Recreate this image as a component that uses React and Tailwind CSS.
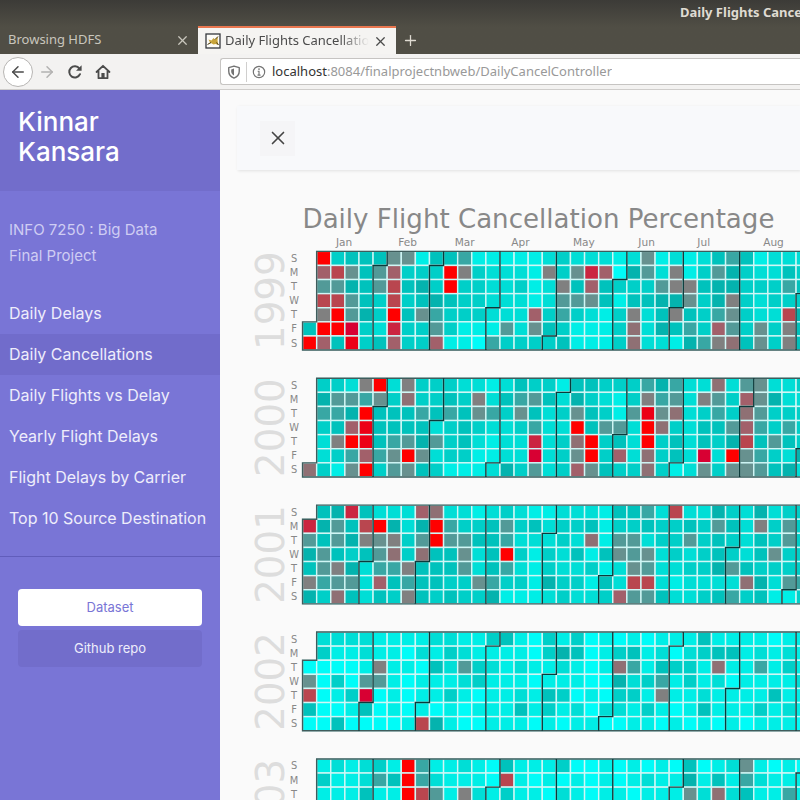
import React from 'react';
import { ArrowLeft, ArrowRight, Plus, X } from 'lucide-react';

const CELL = 20;
const GRID_X = 93;
const GRID_Y = 87;
const YEAR_STEP = 180;
const WEEKS = 36;

const SHADES = {
  0: '#00fcf8', 1: '#00eee6', 2: '#00ded6', 3: '#00cfc8', 4: '#00c2bc', 5: '#04b3ae',
  6: '#38a7a4', 7: '#529a98', 8: '#67918f', 9: '#808080', a: '#8f7074', b: '#a2606a',
  c: '#b9464f', d: '#cb2540', e: '#d80033', f: '#ec0016', g: '#ff0000',
};

// One string per weekday, Sunday first. Each character is one week.
const YEARS = [
  { year: 1999, rows: [
    '.g344 48814 46111 11232 22128 12124 64122 2',
    '.bc84 7b333 g9322 21938 db057 29137 53224 3',
    '.7754 7c453 g3322 31294 b4333 79945 53336 4',
    '.cc74 3c345 43322 21277 84144 55835 93233 3',
    '.9g75 3g486 33322 2b363 21392 49436 8322c 5',
    '4gge3 2d337 31117 28431 113a2 5463b 73839 4',
    'gb4f3 4b33b 11063 33341 113a2 21569 a4839 4',
  ] },
  { year: 2000, rows: [
    '.3329 g2933 32212 43314 43336 5622a 27822 3',
    '.5776 83a33 43924 67425 32139 67297 3b852 2',
    '.665g 44464 64863 84238 4317f 8a236 3a733 3',
    '.34bf 44442 34322 3622g 4772g a3244 7b636 3',
    '.29gf 46757 34212 2d23a g342g 34243 5c474 3',
    '.236b 68g82 33112 2e238 g3b2a 342e2 g8632 5',
    'a318g 37843 11125 3723b 8433a 31283 88745 2',
  ] },
  { year: 2001, rows: [
    '.45d4 222ba 22123 21122 21446 2c225 32523 3',
    'd574c g525g 63347 34233 41334 33437 42937 3',
    '74759 8937g 77446 22232 a1772 33734 32437 3',
    '57434 7a3a4 4824g 31324 14878 23234 32483 3',
    '47952 66944 47246 21322 31287 22335 74333 3',
    '96772 b4644 33863 31533 142cc 21222 2a527 6',
    '53a42 43943 43351 11232 23b77 42234 63411 3',
  ] },
  { year: 2002, rows: [
    '.2222 11112 21134 10313 01010 11141 11101 1',
    '.3112 11021 32111 10354 01341 20234 41212 1',
    '00001 91104 27321 21121 01a61 4331a 11613 1',
    '80307 71011 12311 10111 00523 61312 01111 2',
    'c013e 01011 31011 21430 10331 91121 11141 1',
    '40014 01010 10111 41312 02213 10141 11312 1',
    '00400 001c5 10011 10101 10011 01010 10111 0',
  ] },
  { year: 2003, rows: [
    '.1212 31g61 12104 11130 01010 10401 28101 0',
    '.3112 64g62 1110c 10101 01012 11514 16211 1',
    '.1114 11gc7 19213 11021 01101 1182a 24116 1',
    '12111 21fb4 13211 10111 01021 11312 21131 1',
  ] },
];

const MONTHS = [
  ['Jan', 152], ['Feb', 242], ['Mar', 323], ['Apr', 402], ['May', 492],
  ['Jun', 581], ['Jul', 662], ['Aug', 761],
];

const LINKS = [
  'Daily Delays', 'Daily Cancellations', 'Daily Flights vs Delay',
  'Yearly Flight Delays', 'Flight Delays by Carrier', 'Top 10 Source Destination',
];

// Stepped line that runs down the left side of a month
const monthLine = (year, month) => {
  const jan = new Date(Date.UTC(year, 0, 1));
  const first = new Date(Date.UTC(year, month, 1));
  const offset = (first - jan) / 86400000 + jan.getUTCDay();
  const week = Math.floor(offset / 7);
  const day = offset % 7;
  const x = week * CELL;
  if (day === 0) return `M${x} 0V${7 * CELL}`;
  return `M${x + CELL} 0V${day * CELL}H${x}V${7 * CELL}`;
};

const YearGrid = ({ year, rows, index }) => {
  const startDay = new Date(Date.UTC(year, 0, 1)).getUTCDay();
  return (
    <g transform={`translate(${GRID_X} ${GRID_Y + index * YEAR_STEP})`}>
      <text transform="translate(-27 70) rotate(-90)" textAnchor="middle" fontSize="55" fill="#dddddd">{year}</text>
      {'SMTWTFS'.split('').map((d, i) => (
        <text key={i} x="-12" y={i * CELL + 15} textAnchor="middle" fontSize="14" fill="#888888">{d}</text>
      ))}
      {rows.map((row, r) => row.replaceAll(' ', '').split('').map((code, c) => code !== '.' && (
        <rect
          key={`${r}-${c}`}
          x={c * CELL}
          y={r * CELL}
          width={CELL}
          height={CELL}
          fill={SHADES[code]}
          stroke="#d0f6f5"
          strokeWidth="2"
        />
      )))}
      <path
        d={`M${WEEKS * CELL} 0H${startDay ? CELL : 0}V${startDay * CELL}H0V${7 * CELL}H${WEEKS * CELL}`}
        fill="none"
        stroke="#3f5c5c"
        strokeWidth="2"
      />
      {[1, 2, 3, 4, 5, 6, 7, 8].map((m) => (
        <path key={m} d={monthLine(year, m)} fill="none" stroke="#0b3a3a" strokeWidth="2" />
      ))}
    </g>
  );
};

const CalendarChart = () => (
  <svg viewBox="0 0 1200 1000" className="w-[846px] shrink-0 font-['DejaVu_Sans',sans-serif]" role="img" aria-label="Daily Flight Cancellation Percentage">
    <text x="93" y="54" fontSize="37" fill="#888888">Daily Flight Cancellation Percentage</text>
    {MONTHS.map(([name, x]) => (
      <text key={name} x={x} y="79" textAnchor="middle" fontSize="15" fill="#888888">{name}</text>
    ))}
    {YEARS.map((y, i) => <YearGrid key={y.year} {...y} index={i} />)}
  </svg>
);

const ReloadIcon = () => (
  <svg viewBox="0 0 16 16" className="size-4" fill="none" stroke="currentColor" strokeWidth="2">
    <path d="M13 10.2A5.6 5.6 0 1 1 12.4 4.6" strokeLinecap="round" />
    <path d="M14.6 1.2v5.6H9z" fill="currentColor" stroke="none" />
  </svg>
);

const HomeIcon = () => (
  <svg viewBox="0 0 16 16" className="size-4" fill="none" stroke="currentColor" strokeWidth="1.8" strokeLinejoin="round" strokeLinecap="round">
    <path d="M1.5 8 8 1.8 14.5 8M3.5 7v7.2h9V7" />
    <path d="M6.4 14V9h3.2v5z" fill="currentColor" stroke="none" />
  </svg>
);

const ShieldIcon = () => (
  <svg viewBox="0 0 16 16" className="size-[14px] shrink-0" fill="none" stroke="currentColor" strokeWidth="1.6">
    <path d="M8 1.2 14 3v4.2c0 3.6-2.4 6.4-6 7.8-3.6-1.4-6-4.2-6-7.8V3z" strokeLinejoin="round" />
    <path d="M8 4v8c-2-1-3.2-2.7-3.2-5V5z" fill="currentColor" stroke="none" />
  </svg>
);

const InfoIcon = () => (
  <svg viewBox="0 0 16 16" className="size-[14px] shrink-0" fill="none" stroke="currentColor" strokeWidth="1.3">
    <circle cx="8" cy="8" r="6.5" />
    <path d="M6.5 7.2H8v4M6.3 11.5h3.5" />
    <circle cx="8" cy="4.6" r="1" fill="currentColor" stroke="none" />
  </svg>
);

const Favicon = () => (
  <svg viewBox="0 0 16 16" className="size-4 shrink-0">
    <rect x="1" y="1" width="14" height="14" fill="#fdfcf8" stroke="#35383c" strokeWidth="1.3" />
    <path d="M2.5 11.5 5 9.500 3.500 6.500 6.500 7.500 8.500 5l1.500 1.500L13 3.500l-.5 4 1 4.500-3-1-2 .5-2.500-1.500z" fill="#c9a53a" />
    <path d="M2.500 11.500 6 9.500M10 6.500l3-3M11.500 9.500l2 2.500" stroke="#4a3c1c" strokeWidth="1" />
  </svg>
);

const Browser = () => (
  <header className="font-['Noto_Sans',sans-serif] text-[13px]">
    <div className="bg-linear-to-b from-[#3c3b37] to-[#504e45] to-50%">
      <div className="flex h-[26px] justify-end overflow-hidden text-[#dfdbd2]">
        <p className="w-[120px] shrink-0 whitespace-nowrap leading-6 font-bold">Daily Flights Cancellation</p>
      </div>
      <div className="flex h-7 items-stretch">
        <div className="flex w-[198px] items-center justify-between px-2 text-[#c9c6bd]">
          <span>Browsing HDFS</span>
          <button aria-label="Close Browsing HDFS"><X size={15} /></button>
        </div>
        <div className="flex w-[198px] items-center gap-1 border-t-2 border-[#e9764f] bg-[#f5f4f2] pr-2 pl-[7px] text-[#4b4b4b]">
          <Favicon />
          <span className="flex-1 overflow-hidden whitespace-nowrap mask-r-from-80% mask-r-to-100%">Daily Flights Cancellation</span>
          <button aria-label="Close Daily Flights Cancellation"><X size={15} /></button>
        </div>
        <button className="px-1.5 text-[#dfdbd2]" aria-label="New tab"><Plus size={17} strokeWidth={1.8} /></button>
      </div>
    </div>
    <nav className="flex h-9 items-center border-b border-[#cfcdcb] bg-[#f3f2f1] text-[#4b4b4b]" aria-label="Browser">
      <div className="flex w-[220px] shrink-0 items-center pl-[3px]">
        <button className="grid size-[30px] place-items-center rounded-full border border-[#b7b5b3] bg-white" aria-label="Back"><ArrowLeft size={18} /></button>
        <button className="grid w-7 place-items-center text-[#b3b2b1]" aria-label="Forward"><ArrowRight size={18} /></button>
        <button className="grid w-7 place-items-center" aria-label="Reload"><ReloadIcon /></button>
        <button className="grid w-7 place-items-center" aria-label="Home"><HomeIcon /></button>
      </div>
      <div className="flex h-[27px] min-w-0 flex-1 items-center rounded-l-[3px] border border-r-0 border-[#c6c4c2] bg-white px-1.5 text-[#737373]">
        <ShieldIcon />
        <span className="mx-[5px] h-5 w-px bg-[#d0cfce]" />
        <InfoIcon />
        <p className="ml-1.5 truncate text-[#999999]"><span className="text-[#333333]">localhost</span>:8084/finalprojectnbweb/DailyCancelController</p>
      </div>
    </nav>
  </header>
);

const Sidebar = () => (
  <aside className="w-[220px] shrink-0 bg-[#7975d6] font-['Inter',sans-serif] text-base text-[#eeedfb]">
    <div className="bg-[#726dcb] px-[18px] pt-[17px] pb-6">
      <h3 className="text-[26px] leading-[30px] font-medium text-white">Kinnar Kansara</h3>
    </div>
    <p className="px-[9px] pt-[26px] pb-6 text-[15px] leading-[26px] text-[#cfcdf3]">INFO 7250 : Big Data<br />Final Project</p>
    <ul className="border-b border-[#615dbb] pb-[17px]">
      {LINKS.map((label) => (
        <li key={label}>
          <a
            href="#"
            className={`block px-[9px] py-2 leading-[25px] whitespace-nowrap ${label === 'Daily Cancellations' ? 'bg-[#716ccb]' : ''}`}
          >
            {label}
          </a>
        </li>
      ))}
    </ul>
    <div className="flex flex-col gap-1 px-[18px] pt-8 text-center text-[13px] leading-[37px]">
      <a href="#" className="rounded-[4px] bg-white text-[#7975d6]">Dataset</a>
      <a href="#" className="rounded-[4px] bg-[#726dcb]">Github repo</a>
    </div>
  </aside>
);

export default function App() {
  return (
    <div className="flex h-screen flex-col overflow-hidden bg-[#fafafa]">
      <Browser />
      <div className="flex min-h-0 flex-1">
        <Sidebar />
        <main className="min-w-0 flex-1 overflow-hidden pt-4 pl-[17px]">
          <div className="mb-5 flex h-16 items-center bg-[#f8f9fb] px-[23px] shadow-[1px_1px_3px_rgba(0,0,0,0.1)]">
            <button className="grid size-[35px] place-items-center bg-[#f5f5f7] text-[#444444]" aria-label="Toggle sidebar">
              <X size={22} strokeWidth={1.8} />
            </button>
          </div>
          <CalendarChart />
        </main>
      </div>
    </div>
  );
}
